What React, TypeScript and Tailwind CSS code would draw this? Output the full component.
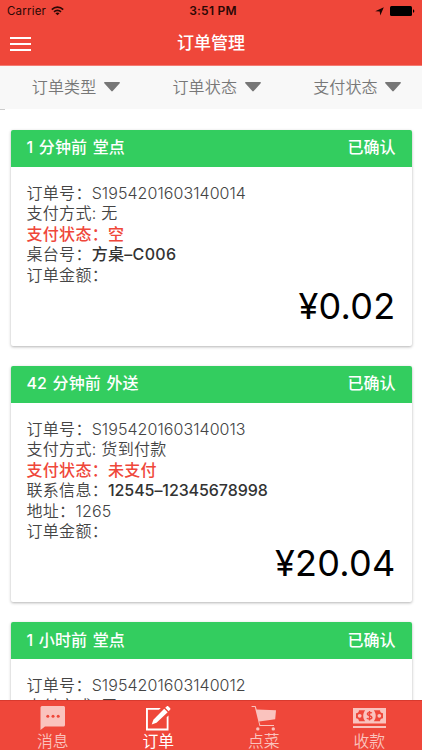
import React from "react";

type Line = {
  label: string;
  value: string;
  tone?: "plain" | "alert" | "strong";
  valueClass?: string;
};

type Order = {
  title: string;
  status: string;
  lines: Line[];
  price: string;
};

const orders: Order[] = [
  {
    title: "1 分钟前 堂点",
    status: "已确认",
    price: "¥0.02",
    lines: [
      { label: "订单号：", value: "S1954201603140014", valueClass: "tracking-[0.06px]" },
      { label: "支付方式: ", value: "无" },
      { label: "支付状态：", value: "空", tone: "alert" },
      { label: "桌台号：", value: "方桌–C006", tone: "strong" },
      { label: "订单金额：", value: "" },
    ],
  },
  {
    title: "42 分钟前 外送",
    status: "已确认",
    price: "¥20.04",
    lines: [
      { label: "订单号：", value: "S1954201603140013", valueClass: "tracking-[0.06px]" },
      { label: "支付方式: ", value: "货到付款" },
      { label: "支付状态：", value: "未支付", tone: "alert" },
      { label: "联系信息：", value: "12545–12345678998", tone: "strong", valueClass: "tracking-[-0.08px]" },
      { label: "地址：", value: "1265", valueClass: "tracking-[0.2px]" },
      { label: "订单金额：", value: "" },
    ],
  },
  {
    title: "1 小时前 堂点",
    status: "已确认",
    price: "¥0.01",
    lines: [
      { label: "订单号：", value: "S1954201603140012", valueClass: "tracking-[0.06px]" },
      { label: "支付方式: ", value: "无" },
    ],
  },
];

function StatusBar() {
  return (
    <div className="grid h-[22px] grid-cols-3 items-center px-[7px] text-[12px] leading-[22px] text-[#2b0805]">
      <div className="flex items-center gap-[5px]">
        <span className="text-[11.500px] tracking-[0.2px]">Carrier</span>
        <svg width="13" height="10" viewBox="0 0 13 10" fill="none" stroke="#2b0805" strokeWidth="1.6">
          <path d="M0.8 3.6C4 .3 9 .3 12.2 3.6" />
          <path d="M3 5.9c2-2 5-2 7 0" />
          <path d="M6.5 9.3L4.4 7.2c1.2-1 3-1 4.2 0z" fill="#2b0805" stroke="none" />
        </svg>
      </div>
      <span className="pl-[4px] text-center font-semibold tracking-[0.25px]">3:51 PM</span>
      <div className="flex items-center justify-end gap-[6px]">
        <svg width="9" height="9" viewBox="0 0 9 9" fill="#1c0503">
          <path d="M8.8.2L5.3 8.6 4.7 4.4.2 4.2z" />
        </svg>
        <svg width="25" height="10" viewBox="0 0 25 10" fill="#000">
          <rect x="0" y="0" width="22" height="10" rx="1.5" />
          <path d="M23 3.2c1.8.5 1.8 3.1 0 3.6z" />
        </svg>
      </div>
    </div>
  );
}

function FilterItem({ label }: { label: string }) {
  return (
    <div className="flex flex-1 items-center justify-center gap-[7.500px] pb-[2px] pl-[11px]">
      <span className="tracking-[0.15px]">{label}</span>
      <svg width="16" height="10" viewBox="0 0 16 10" fill="#777">
        <path d="M.8 0h14.4c.7 0 1 .7.5 1.2L8.700 9.100c-.4.5-1 .5-1.400 0L.3 1.200C-.2.7.1 0 .8 0z" />
      </svg>
    </div>
  );
}

function OrderCard({ order }: { order: Order }) {
  return (
    <section className="shrink-0 overflow-hidden rounded-[2px] bg-white shadow-[0_1px_3px_rgba(0,0,0,0.3)]">
      <header className="flex h-[37px] items-center justify-between bg-[#33cd5f] px-[16px] pb-[2px] text-[16px] font-medium text-white">
        <span className="tracking-[0.1px] [word-spacing:1.2px]">{order.title}</span>
        <span>{order.status}</span>
      </header>
      <div className="px-[16px] pt-[16px] pb-[14.500px] text-[16px] leading-[20.500px] font-[350] text-[#444]">
        {order.lines.map((line) => (
          <div
            key={line.label}
            className={
              "h-[20.500px] whitespace-pre tracking-[0.3px] " +
              (line.tone === "alert" ? "font-medium text-[#ef473a]" : "")
            }
          >
            <span>{line.label}</span>
            <span className={(line.tone === "strong" ? "font-medium text-[#333] " : "") + (line.valueClass ?? "")}>
              {line.value}
            </span>
          </div>
        ))}
        <div className="h-[46px] text-right text-[36px] leading-[43px] font-normal tracking-[0.25px] text-black">
          {order.price}
        </div>
      </div>
    </section>
  );
}

function MessageIcon() {
  return (
    <svg width="26" height="26" viewBox="0 0 26 26">
      <path
        d="M2.500 1h21c.8 0 1.500.6 1.500 1.500v17.500c0 .8-.6 1.500-1.500 1.500H5l-4.500 3.500V2.500C.5 1.600 1.400 1 2.500 1z"
        fill="#fac3be"
      />
      <g fill="#ef473a">
        <circle cx="7.800" cy="11.200" r="1.500" />
        <circle cx="13" cy="11.200" r="1.500" />
        <circle cx="18.200" cy="11.200" r="1.500" />
      </g>
    </svg>
  );
}

function ComposeIcon() {
  return (
    <svg width="26" height="26" viewBox="0 0 26 26" fill="#fff">
      <path d="M1 3h14.800L14 4.800H2.900v18.800h18.800V12.300l1.800-1.800V25.500H1z" />
      <path d="M19.200 3.800l3.500 3.500L11.500 17.800l-4.800 1.700 1.700-4.800z" />
      <path d="M20.200 2.800L21.900 1.200c.4-.4.9-.4 1.300 0l2 2c.4.400.4.900 0 1.300l-1.500 1.800z" />
    </svg>
  );
}

function CartIcon() {
  return (
    <svg width="26" height="26" viewBox="0 0 26 26" fill="#fac3be">
      <path d="M.6 1h4l1.100 3.500L25 5.300l-.8 9L8.200 16.600l1.100 3.400H23v1H8.500L3.800 2.100H.6z" />
      <circle cx="6.800" cy="23.900" r="1.700" />
      <circle cx="22.300" cy="23.900" r="1.700" />
    </svg>
  );
}

function CashIcon() {
  return (
    <svg width="33" height="26" viewBox="0 0 33 26">
      <path d="M0 3h33v15.500H0zM0 21h33v2H0z" fill="#fac3be" />
      <path
        d="M6 5.200h6.200c-2.600 3.200-2.600 7.900 0 11.100H6c0-1.700-1.300-3-3-3V8.200c1.700 0 3-1.300 3-3zM27 5.200h-6.200c2.600 3.200 2.600 7.900 0 11.100H27c0-1.700 1.300-3 3-3V8.200c-1.700 0-3-1.300-3-3z"
        fill="#ef473a"
      />
      <circle cx="6.700" cy="10.800" r="1.900" fill="#fac3be" />
      <circle cx="26.300" cy="10.800" r="1.900" fill="#fac3be" />
      <path
        d="M18.800 8.300c-.5-1-4.500-1.300-4.500.8 0 2 4.600 1.300 4.600 3.400 0 2-4.200 1.900-5 .5M16.500 6v9.600"
        fill="none"
        stroke="#ef473a"
        strokeWidth="1.400"
      />
    </svg>
  );
}

function Tab({ label, icon, active }: { label: string; icon: React.ReactNode; active?: boolean }) {
  return (
    <div className="flex flex-1 flex-col items-center pt-[4px]">
      <div className="flex h-[26px] items-center">{icon}</div>
      <span
        className={
          "h-[19px] text-[15.800px] leading-[22px] " +
          (active ? "font-normal text-white" : "font-[350] text-[#fac3be]")
        }
      >
        {label}
      </span>
    </div>
  );
}

export default function App() {
  return (
    <div className="flex h-[750px] w-[422px] flex-col overflow-hidden bg-white font-['Inter','Noto_Sans_CJK_SC',sans-serif]">
      <div className="h-[66px] shrink-0 border-b border-[#f47b72] bg-[#ef473a]">
        <StatusBar />
        <div className="grid h-[43px] grid-cols-3 items-center px-[10px]">
          <div className="flex w-[21px] flex-col gap-[4px]">
            <i className="h-[2px] bg-white" />
            <i className="h-[2px] bg-white" />
            <i className="h-[2px] bg-white" />
          </div>
          <h1 className="pt-px text-center text-[17px] font-medium text-white">订单管理</h1>
        </div>
      </div>
      <div className="flex h-[43px] shrink-0 bg-[#f8f8f8] text-[16px] font-[350] text-[#777]">
        <FilterItem label="订单类型" />
        <FilterItem label="订单状态" />
        <FilterItem label="支付状态" />
      </div>
      <div className="h-px w-[5px] shrink-0 bg-[#ccc]" />
      <main className="flex min-h-0 flex-1 flex-col gap-[20px] overflow-hidden px-[10.500px] pt-[19.500px]">
        {orders.map((order) => (
          <OrderCard key={order.title} order={order} />
        ))}
      </main>
      <nav className="flex h-[50px] shrink-0 border-t border-[#d83a2e] bg-[#ef473a]">
        <Tab label="消息" icon={<MessageIcon />} />
        <Tab label="订单" icon={<ComposeIcon />} active />
        <Tab label="点菜" icon={<CartIcon />} />
        <Tab label="收款" icon={<CashIcon />} />
      </nav>
    </div>
  );
}
